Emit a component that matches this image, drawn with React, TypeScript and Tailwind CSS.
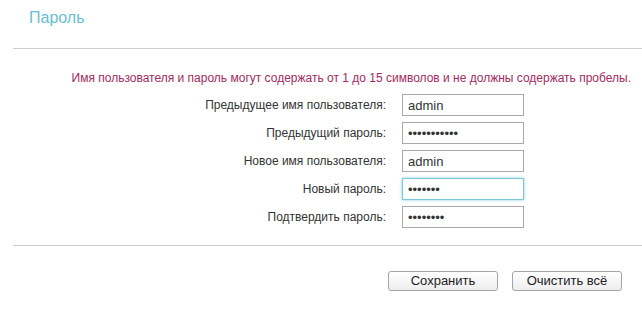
const rows = [
  { label: "Предыдущее имя пользователя:", value: "admin", type: "text" },
  { label: "Предыдущий пароль:", value: "12345678901", type: "password" },
  { label: "Новое имя пользователя:", value: "admin", type: "text" },
  { label: "Новый пароль:", value: "1234567", type: "password", focus: true },
  { label: "Подтвердить пароль:", value: "12345678", type: "password" },
];

export default function App() {
  return (
    <div className="w-[642px] h-[316px] bg-white overflow-hidden font-['Liberation_Sans',Arial,sans-serif] text-[#333]">
      {/* title */}
      <div className="h-[48px] pl-[29px] pt-[8px]">
        <h2 className="text-[16px] leading-[20px] text-[#67c0cf]">Пароль</h2>
      </div>
      <div className="ml-[13px] border-t border-[#cccccc]" />

      {/* hint */}
      <div className="flex justify-end pr-[11px] mt-[22px]">
        <p className="text-[12px] leading-[14px] text-[#a52a5e]">
          Имя пользователя и пароль могут содержать от 1 до 15 символов и не должны содержать пробелы.
        </p>
      </div>

      {/* form */}
      <div className="flex flex-col gap-[6px] mt-[9px]">
        {rows.map((r) => (
          <div key={r.label} className="flex items-center h-[22px]">
            <label className="w-[386px] text-right text-[12px] text-[#333]">{r.label}</label>
            <input
              type={r.type}
              defaultValue={r.value}
              readOnly
              className={
                r.focus
                  ? "ml-[16px] w-[122px] h-[22px] px-[5px] text-[13px] text-[#333] border border-[#7cc8d6] shadow-[0_0_3px_#8fd0dc] outline-none"
                  : "ml-[16px] w-[122px] h-[22px] px-[5px] text-[13px] text-[#333] border border-[#a9a9a9] outline-none"
              }
            />
          </div>
        ))}
      </div>

      <div className="ml-[13px] mt-[17px] border-t border-[#cccccc]" />

      {/* buttons */}
      <div className="flex justify-end gap-[14px] pr-[20px] mt-[25px]">
        <button className="w-[110px] h-[20px] rounded-[3px] border border-[#a5a5a5] bg-gradient-to-b from-white to-[#eeeeee] text-[13px] leading-[18px] text-[#222]">
          Сохранить
        </button>
        <button className="w-[110px] h-[20px] rounded-[3px] border border-[#a5a5a5] bg-gradient-to-b from-white to-[#eeeeee] text-[13px] leading-[18px] text-[#222]">
          Очистить всё
        </button>
      </div>
    </div>
  );
}
